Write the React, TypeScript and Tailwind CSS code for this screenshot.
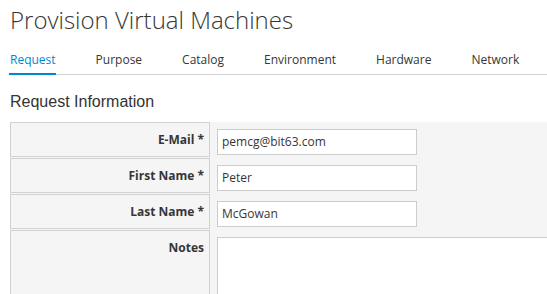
import React from 'react';

const tabs = ['Request', 'Purpose', 'Catalog', 'Environment', 'Hardware', 'Network'];

const fields = [
  { label: 'E-Mail *', value: 'pemcg@bit63.com' },
  { label: 'First Name *', value: 'Peter' },
  { label: 'Last Name *', value: 'McGowan' },
];

function App() {
  return (
    <div className="min-h-screen bg-white overflow-hidden pl-[10px] text-[#363636] font-['Open_Sans',sans-serif]">
      {/* Title */}
      <h1 className="pt-[7px] text-[24px] leading-[26px] font-light whitespace-nowrap">
        Provision Virtual Machines
      </h1>

      {/* Tabs */}
      <nav className="mt-[16px] flex border-b border-[#d1d1d1] text-[12px] leading-[19px] -ml-px">
        {tabs.map((t, i) => (
          <div
            key={t}
            className={
              i === 0
                ? 'mr-[40px] pt-px pb-[4px] pl-px border-b-2 border-[#0088ce] -mb-px text-[#0088ce]'
                : 'mr-[40px] pt-px pb-[4px] border-b-2 border-transparent -mb-px'
            }
          >
            {t}
          </div>
        ))}
      </nav>

      {/* Section header */}
      <h2 className="mt-[18px] mb-[11px] text-[16px] leading-[18px] text-[#333] font-['Liberation_Sans',Arial,sans-serif]">
        Request Information
      </h2>

      {/* Form */}
      <div className="grid grid-cols-[200px_1fr] gap-y-px bg-[#f5f5f5] text-[12px] leading-[18px]">
        {fields.map((f) => (
          <React.Fragment key={f.label}>
            <div className="h-[35px] border border-[#d1d1d1] pt-[8px] pr-[5px] text-right font-bold">
              {f.label}
            </div>
            <div className="pl-[7px] pt-[7px]">
              <div className="w-[200px] h-[26px] border border-[#cccccc] bg-white pl-[4px] leading-[24px] whitespace-nowrap">
                {f.value}
              </div>
            </div>
          </React.Fragment>
        ))}
        <div className="h-[90px] border border-[#d1d1d1] pt-[8px] pr-[5px] text-right font-bold">
          Notes
        </div>
        <div className="pl-[7px] pt-[7px]">
          <div className="w-[400px] h-[90px] border border-[#cccccc] bg-white" />
        </div>
      </div>
    </div>
  );
}

export default App;
